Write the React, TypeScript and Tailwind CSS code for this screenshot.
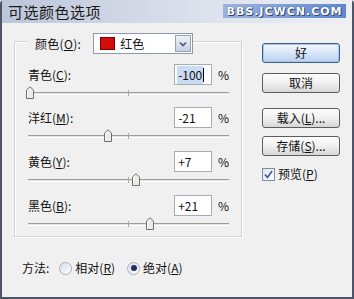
import React from "react";

const font = { fontFamily: '"Noto Sans CJK SC", "Noto Sans", sans-serif' };

function Thumb() {
  return (
    <svg width="10" height="13" viewBox="0 0 10 13" className="block">
      <path d="M1.5 12.5 V4 L5 0.8 L8.5 4 V12.5 Z" fill="#ecebe6" stroke="#6f6f6f" strokeWidth="1" />
      <path d="M2.5 11.5 V4.5 L5 2.2" fill="none" stroke="#ffffff" strokeWidth="1" />
    </svg>
  );
}

function Slider({ pos }: { pos: number }) {
  return (
    <div className="relative h-[14px] w-[201px] ml-[1px]">
      <div className="absolute left-0 right-0 top-[6px] h-[3px] border-t border-[#9d9d9d] border-b border-b-white bg-[#e3e3e3]" />
      <div className="absolute left-[100px] top-[4px] h-[6px] w-px bg-[#a8a8a8]" />
      <div className="absolute top-0" style={{ left: pos - 5 }}>
        <Thumb />
      </div>
    </div>
  );
}

function Row({
  label,
  ul,
  value,
  selected,
  pos,
  mt,
}: {
  label: string;
  ul: string;
  value: string;
  selected?: boolean;
  pos: number;
  mt: string;
}) {
  return (
    <div className={mt}>
      <div className="flex items-center h-[21px]">
        <div className="text-[12px] text-[#111] w-[148px] pl-[1px]">
          {label}(<span className="underline">{ul}</span>):
        </div>
        <div className="w-[38px] h-[21px] border border-[#a5acb5] bg-white flex items-center pl-[2px] text-[12px] text-[#111]">
          {selected ? (
            <>
              <span className="bg-[#c9dcf3] px-[1px]">{value}</span>
              <span className="w-px h-[14px] bg-black" />
            </>
          ) : (
            <span className="pl-[1px]">{value}</span>
          )}
        </div>
        <div className="ml-[6px] text-[12px] text-[#111]">%</div>
      </div>
      <div className="mt-[1px]">
        <Slider pos={pos} />
      </div>
    </div>
  );
}

function Btn({ children, primary, mt }: { children: React.ReactNode; primary?: boolean; mt: string }) {
  return (
    <div
      className={
        "w-[78px] h-[20px] rounded-[3px] border flex items-center justify-center text-[12px] text-[#111] " +
        mt +
        (primary
          ? " border-[#3d5f8c] bg-gradient-to-b from-[#f2f7fd] via-[#d9e7f8] to-[#b6cfee] shadow-[inset_0_0_0_1px_#a9c6ee]"
          : " border-[#5d5d5d] bg-gradient-to-b from-[#fdfdfd] via-[#f0f0f0] to-[#d6d6d6]")
      }
    >
      {children}
    </div>
  );
}

export default function App() {
  return (
    <div className="w-[354px] h-[299px] overflow-hidden bg-[#f0f0f0]" style={font}>
      <div className="w-full h-full flex flex-col border-l-2 border-r-2 border-b-2 border-[#4e5366] rounded-t-[4px]">
        {/* Title bar */}
        <div className="h-[23px] flex items-center justify-between bg-gradient-to-r from-[#bcc6da] via-[#d9deea] to-[#eef0f5] pl-[6px] pr-[6px]">
          <div className="text-[15px] text-[#1a1a1a] leading-none tracking-[0.5px]">可选颜色选项</div>
          <div
            className="h-[14px] w-[123px] mt-[-1px] flex items-center justify-center bg-gradient-to-r from-[#9cb3de] via-[#7e9ed6] to-[#5f88d2] text-[11px] font-bold text-white tracking-[1px] leading-none [text-shadow:0_0_1px_#203050,1px_1px_0_#3a4a6a]"
            style={{ fontFamily: '"DejaVu Sans", sans-serif' }}
          >
            BBS.JCWCN.COM
          </div>
        </div>
        {/* Body */}
        <div className="flex flex-1">
          <div className="w-[240px] pl-[12px]">
            <div className="mt-[18px] h-[196px] w-[228px] border border-[#d3d3d3] shadow-[inset_1px_1px_0_#ffffff,1px_1px_0_#ffffff] px-[12px]">
              <div className="-mt-[9px] flex items-center">
                <div className="bg-[#f0f0f0] pl-[8px] pr-[12px] text-[12px] text-[#111] tracking-[0.3px]">
                  颜色(<span className="underline">O</span>):
                </div>
                <div className="w-[100px] h-[21px] border border-[#8e9aab] bg-white flex items-center">
                  <div className="ml-[6px] w-[15px] h-[13px] bg-[#d10e0e] border border-[#7a0000]" />
                  <div className="ml-[5px] text-[12px] text-[#111] flex-1">红色</div>
                  <div className="w-[16px] h-[17px] mr-[1px] border border-[#9aa3b5] bg-gradient-to-b from-[#eef1f7] to-[#c9d1e0] flex items-center justify-center">
                    <svg width="8" height="6" viewBox="0 0 8 6">
                      <path d="M1 1.5 L4 4.5 L7 1.5" fill="none" stroke="#4d5a78" strokeWidth="1.6" />
                    </svg>
                  </div>
                </div>
              </div>
              <Row label="青色" ul="C" value="-100" selected pos={2} mt="mt-[10px]" />
              <Row label="洋红" ul="M" value="-21" pos={80} mt="mt-[7px]" />
              <Row label="黄色" ul="Y" value="+7" pos={108} mt="mt-[8px]" />
              <Row label="黑色" ul="B" value="+21" pos={122} mt="mt-[8px]" />
            </div>
            <div className="mt-[22px] ml-[8px] flex items-center text-[12px] text-[#111]">
              <span>方法:</span>
              <span className="ml-[10px] w-[13px] h-[13px] rounded-full border border-[#a5b0c2] bg-gradient-to-br from-[#d9dde6] to-[#ffffff]" />
              <span className="ml-[3px]">
                相对(<span className="underline">R</span>)
              </span>
              <span className="ml-[12px] w-[13px] h-[13px] rounded-full border border-[#a5b0c2] bg-gradient-to-br from-[#d9dde6] to-[#ffffff] flex items-center justify-center">
                <span className="w-[6px] h-[6px] rounded-full bg-[#2a2d5c]" />
              </span>
              <span className="ml-[3px]">
                绝对(<span className="underline">A</span>)
              </span>
            </div>
          </div>
          <div className="pl-[20px] flex flex-col">
            <Btn primary mt="mt-[20px]">好</Btn>
            <Btn mt="mt-[10px]">取消</Btn>
            <Btn mt="mt-[15px]">
              载入(<span className="underline">L</span>)...
            </Btn>
            <Btn mt="mt-[8px]">
              存储(<span className="underline">S</span>)...
            </Btn>
            <div className="mt-[9px] flex items-center text-[12px] text-[#111]">
              <span className="w-[13px] h-[13px] border border-[#7d8ba6] bg-gradient-to-br from-[#dfe3ea] to-white flex items-center justify-center">
                <svg width="9" height="9" viewBox="0 0 9 9">
                  <path d="M1 4.5 L3.5 7.5 L8 1" fill="none" stroke="#3b5aa0" strokeWidth="1.6" />
                </svg>
              </span>
              <span className="ml-[3px]">
                预览(<span className="underline">P</span>)
              </span>
            </div>
          </div>
        </div>
      </div>
    </div>
  );
}
